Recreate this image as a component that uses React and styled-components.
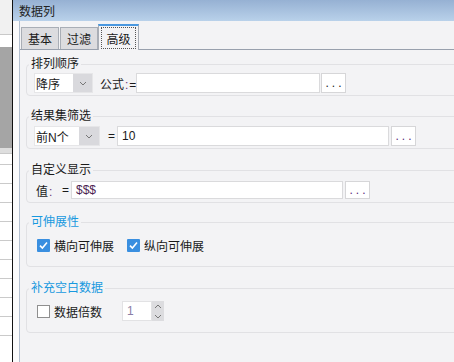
import React from "react";
import styled, { createGlobalStyle } from "styled-components";

const GlobalStyle = createGlobalStyle`
  html, body {
    margin: 0;
    padding: 0;
  }
  body {
    width: 454px;
    height: 362px;
    overflow: hidden;
    font-family: "Liberation Sans", "Noto Sans CJK SC", sans-serif;
    font-size: 12px;
    color: #1a1a1a;
  }
`;

const Chevron = ({ up }) => (
  <svg width="8" height="5" viewBox="0 0 8 5">
    <polyline
      points={up ? "1,4 4,1 7,4" : "1,1 4,4 7,1"}
      fill="none"
      stroke="#777"
      strokeWidth="1"
    />
  </svg>
);

const CheckMark = () => (
  <svg width="13" height="13" viewBox="0 0 13 13">
    <rect x="0" y="0" width="13" height="13" rx="1" fill="#3a8fe0" />
    <path
      d="M3 6.6 L5.4 9 L10 3.6"
      fill="none"
      stroke="#fff"
      strokeWidth="1.6"
    />
  </svg>
);

const DataColumnDialog = () => {
  return (
    <Screen>
      <SideStrip>
        <StripBlock $h={34} $bg="#f1f1f1" $line />
        <StripBlock $h={12} $bg="#ffffff" />
        <StripBlock $h={101} $bg="#a5a5a5" />
        <StripBlock $h={5} $bg="#dedede" $line />
        <StripRows />
      </SideStrip>

      <Dialog>
        <TitleBar>数据列</TitleBar>
        <Body>
          <Gutter />
          <Main>
            <TabStrip>
              <Tab $mr={1}>基本</Tab>
              <Tab>过滤</Tab>
              <Tab $active>
                <FocusRing>高级</FocusRing>
              </Tab>
            </TabStrip>

            <Content>
              <Group $mt={3} $pt={1} $pb={2}>
                <Legend>排列顺序</Legend>
                <Row>
                  <Combo $w={59}>
                    <ComboText>降序</ComboText>
                    <ComboArrow $w={19}>
                      <Chevron />
                    </ComboArrow>
                  </Combo>
                  <Label $w={43} $pl={7}>
                    公式<Colon>:</Colon>=
                  </Label>
                  <TextBox $w={184} />
                  <DotsButton $ml={1}>...</DotsButton>
                </Row>
              </Group>

              <Group $mt={12} $pt={2} $pb={2}>
                <Legend>结果集筛选</Legend>
                <Row>
                  <Combo $w={66}>
                    <ComboText>前N个</ComboText>
                    <ComboArrow $w={20}>
                      <Chevron />
                    </ComboArrow>
                  </Combo>
                  <Label $w={17} $pl={8}>
                    =
                  </Label>
                  <TextBox $w={272}>10</TextBox>
                  <DotsButton $ml={2} $tint>
                    ...
                  </DotsButton>
                </Row>
              </Group>

              <Group $mt={13} $pt={2} $pb={2}>
                <Legend>自定义显示</Legend>
                <Row>
                  <Label $w={26} $pl={2}>
                    值<Colon>:</Colon>
                  </Label>
                  <Label $w={11} $pl={2}>
                    =
                  </Label>
                  <TextBox $w={272} $h={18} $color="#4e1f52">
                    $$$
                  </TextBox>
                  <DotsButton $ml={2} $h={18} $tint>
                    ...
                  </DotsButton>
                </Row>
              </Group>

              <Group $mt={11} $pt={5} $pb={11}>
                <Legend $blue>可伸展性</Legend>
                <Row>
                  <CheckItem $ml={3}>
                    <CheckMark />
                    <CheckLabel>横向可伸展</CheckLabel>
                  </CheckItem>
                  <CheckItem $ml={13}>
                    <CheckMark />
                    <CheckLabel>纵向可伸展</CheckLabel>
                  </CheckItem>
                </Row>
              </Group>

              <Group $mt={13} $pt={5} $pb={11}>
                <Legend $blue>补充空白数据</Legend>
                <Row>
                  <CheckItem $ml={3}>
                    <EmptyBox />
                    <CheckLabel>数据倍数</CheckLabel>
                  </CheckItem>
                  <Spinner>
                    <SpinInput>1</SpinInput>
                    <SpinButtons>
                      <Chevron up />
                      <Chevron />
                    </SpinButtons>
                  </Spinner>
                </Row>
              </Group>
            </Content>
          </Main>
        </Body>
      </Dialog>
    </Screen>
  );
};

const Screen = styled.div`
  display: flex;
  width: 454px;
  height: 362px;
  overflow: hidden;
`;

const SideStrip = styled.div`
  width: 12px;
  flex-shrink: 0;
  display: flex;
  flex-direction: column;
  border-right: 1px solid #111;
`;

const StripBlock = styled.div`
  height: ${(p) => p.$h}px;
  flex-shrink: 0;
  background: ${(p) => p.$bg};
  border-bottom: ${(p) => (p.$line ? "1px solid #c9c9c9" : "none")};
`;

const StripRows = styled.div`
  flex: 1;
  background: repeating-linear-gradient(
    to bottom,
    #ffffff 0 18px,
    #cacaca 18px 19px
  );
  background-position: 0 -8px;
`;

const Dialog = styled.div`
  flex: 1;
  min-width: 0;
  display: flex;
  flex-direction: column;
`;

const TitleBar = styled.div`
  height: 21px;
  flex-shrink: 0;
  display: flex;
  align-items: center;
  padding-left: 6px;
  background: linear-gradient(to bottom, #96b1d3, #b9d1ea);
  color: #222;
  font-size: 12px;
`;

const Body = styled.div`
  flex: 1;
  display: flex;
  min-height: 0;
`;

const Gutter = styled.div`
  width: 6px;
  flex-shrink: 0;
  background: #fbfbfc;
  border-right: 1px solid #b3bfcf;
`;

const Main = styled.div`
  flex: 1;
  min-width: 0;
  display: flex;
  flex-direction: column;
  background: #f3f3f5;
`;

const TabStrip = styled.div`
  height: 28px;
  flex-shrink: 0;
  display: flex;
  align-items: flex-end;
  padding-left: 1px;
  border-bottom: 1px solid #98a0ad;
`;

const Tab = styled.div`
  box-sizing: border-box;
  width: ${(p) => (p.$active ? 41 : 38)}px;
  height: ${(p) => (p.$active ? 26 : 22)}px;
  margin-right: ${(p) => p.$mr || 0}px;
  margin-bottom: ${(p) => (p.$active ? -1 : 0)}px;
  padding: ${(p) => (p.$active ? "1px 2px 1px" : "0")};
  display: flex;
  align-items: center;
  justify-content: center;
  border: 1px solid #a9aeb6;
  border-top: ${(p) => (p.$active ? "2px solid #4a98e0" : "1px solid #a9aeb6")};
  border-bottom: none;
  background: ${(p) => (p.$active ? "#f3f3f5" : "#dcdcdf")};
  font-size: 12px;
  color: #1a1a1a;
`;

const FocusRing = styled.div`
  flex: 1;
  align-self: stretch;
  display: flex;
  align-items: center;
  justify-content: center;
  border: 1px dotted #555;
`;

const Content = styled.div`
  padding: 3px 0 0 6px;
  display: flex;
  flex-direction: column;
`;

const Group = styled.fieldset`
  box-sizing: border-box;
  width: 500px;
  min-width: 0;
  margin: ${(p) => p.$mt}px 0 0;
  padding: ${(p) => p.$pt}px 0 ${(p) => p.$pb}px 2px;
  border: 1px solid #e1e1e4;
  border-radius: 4px;
`;

const Legend = styled.legend`
  padding: 0 2px;
  line-height: 16px;
  font-size: 12px;
  color: ${(p) => (p.$blue ? "#1899df" : "#1a1a1a")};
`;

const Row = styled.div`
  display: flex;
  align-items: center;
  height: 20px;
  margin-left: 5px;
`;

const Combo = styled.div`
  box-sizing: border-box;
  width: ${(p) => p.$w}px;
  height: 20px;
  display: flex;
  background: #fff;
  border: 1px solid #e6e6e8;
`;

const ComboText = styled.div`
  flex: 1;
  display: flex;
  align-items: center;
  padding-left: 1px;
`;

const ComboArrow = styled.div`
  width: ${(p) => p.$w}px;
  display: flex;
  align-items: center;
  justify-content: center;
  background: #d9d9dd;
`;

const Label = styled.div`
  box-sizing: border-box;
  width: ${(p) => p.$w}px;
  padding-left: ${(p) => p.$pl || 0}px;
  white-space: nowrap;
`;

const Colon = styled.span`
  color: #6a3a7a;
  margin: 0 1px;
`;

const TextBox = styled.div`
  box-sizing: border-box;
  width: ${(p) => p.$w}px;
  height: ${(p) => p.$h || 20}px;
  display: flex;
  align-items: center;
  padding-left: 4px;
  background: #fff;
  border: 1px solid #dadadc;
  color: ${(p) => p.$color || "#1a1a1a"};
`;

const DotsButton = styled.div`
  box-sizing: border-box;
  width: 25px;
  height: ${(p) => p.$h || 20}px;
  margin-left: ${(p) => p.$ml}px;
  display: flex;
  align-items: center;
  justify-content: center;
  padding-left: 3px;
  background: #fff;
  border: 1px solid #d6d6d8;
  letter-spacing: 3px;
  color: ${(p) => (p.$tint ? "#5a2a7a" : "#222")};
`;

const CheckItem = styled.div`
  display: flex;
  align-items: center;
  margin-left: ${(p) => p.$ml}px;
`;

const CheckLabel = styled.span`
  margin-left: 4px;
  white-space: nowrap;
`;

const EmptyBox = styled.div`
  box-sizing: border-box;
  width: 13px;
  height: 13px;
  background: #fff;
  border: 1px solid #8f8f8f;
`;

const Spinner = styled.div`
  display: flex;
  height: 20px;
  margin-left: 20px;
`;

const SpinInput = styled.div`
  box-sizing: border-box;
  width: 30px;
  display: flex;
  align-items: center;
  padding-left: 4px;
  background: #fff;
  border: 1px solid #e2e2e4;
  color: #8a7ea6;
`;

const SpinButtons = styled.div`
  width: 12px;
  display: flex;
  flex-direction: column;
  align-items: center;
  justify-content: space-around;
  background: #dcdcdf;
`;

const App = () => (
  <>
    <GlobalStyle />
    <DataColumnDialog />
  </>
);

export default App;
